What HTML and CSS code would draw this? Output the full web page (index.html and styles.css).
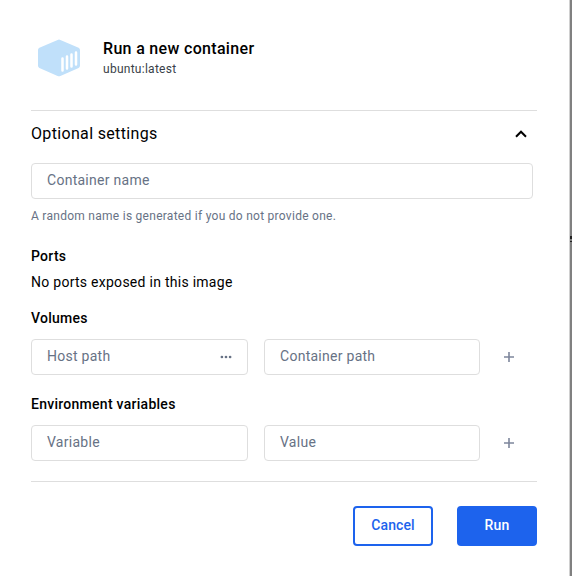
FILE: index.html
```html
<!DOCTYPE html>
<html lang="en">
<head>
<meta charset="utf-8">
<title>Run a new container</title>
<link rel="stylesheet" href="styles.css">
</head>
<body>
<main class="dialog">
  <header class="header">
    <svg class="logo" width="42" height="38" viewBox="0 0 42 38">
      <path d="M19.6.9a3.6 3.6 0 0 1 2.8 0L40.6 8.700Q42 9.400 42 11V26.600Q42 28.200 40.600 28.900L22.400 36.900a3.600 3.600 0 0 1-2.800 0L1.400 28.900Q0 28.200 0 26.600V11Q0 9.400 1.400 8.700Z" fill="#c0e0fa"/>
      <path d="M24.500 19.500V31.500M29 17.500V29.500M33.500 15.500V27.500M38 13.500V25.500" stroke="#fff" stroke-width="2.500" stroke-linecap="round"/>
    </svg>
    <div>
      <h1 class="title">Run a new container</h1>
      <p class="image">ubuntu:latest</p>
    </div>
  </header>
  <section class="settings">
    <div class="summary">
      <h2 class="summary-title">Optional settings</h2>
      <svg width="12" height="8" viewBox="0 0 12 8"><path d="M1 6.700 6 1.700 11 6.700" fill="none" stroke="#000" stroke-width="2"/></svg>
    </div>
    <div class="field field-name"><span>Container name</span></div>
    <p class="hint">A random name is generated if you do not provide one.</p>
    <h3 class="label">Ports</h3>
    <p class="text">No ports exposed in this image</p>
    <h3 class="label">Volumes</h3>
    <div class="row">
      <div class="field"><span>Host path</span>
        <svg class="browse" width="12" height="4" viewBox="0 0 12 4" fill="#677285"><circle cx="1.900" cy="2" r="1.350"/><circle cx="6" cy="2" r="1.350"/><circle cx="10.100" cy="2" r="1.350"/></svg>
      </div>
      <div class="field"><span>Container path</span></div>
      <svg class="add" width="10" height="10" viewBox="0 0 10 10"><path d="M0 5H10M5 0V10" stroke="#7d869c" stroke-width="1.600"/></svg>
    </div>
    <h3 class="label">Environment variables</h3>
    <div class="row">
      <div class="field"><span>Variable</span></div>
      <div class="field"><span>Value</span></div>
      <svg class="add" width="10" height="10" viewBox="0 0 10 10"><path d="M0 5H10M5 0V10" stroke="#7d869c" stroke-width="1.600"/></svg>
    </div>
  </section>
  <footer class="actions">
    <button class="button button-outline">Cancel</button>
    <button class="button button-primary">Run</button>
  </footer>
</main>
<svg class="backdrop-mark" width="2" height="8" viewBox="0 0 2 8"><path d="M0 1H2V4H0ZM0 6H2V7H0Z" fill="#222"/></svg>
</body>
</html>
```

FILE: styles.css
```css
* {
  box-sizing: border-box;
}

body {
  position: relative;
  margin: 0;
  height: 576px;
  overflow: hidden;
  background: #808080;
  font-family: Roboto, sans-serif;
  color: #000;
}

h1, h2, h3, p {
  margin: 0;
  font-weight: 400;
}

svg {
  display: block;
  flex: none;
}

.dialog {
  width: 570px;
  height: 576px;
  padding: 38px 32px 0 31px;
  background: #fff;
  border-right: 1px solid #d0d0d0;
}

.header {
  display: flex;
  gap: 23px;
  height: 72px;
  padding-left: 7px;
}

.logo {
  margin-top: 1px;
}

.title {
  margin-top: 1px;
  font-size: 16px;
  line-height: 20px;
  font-weight: 500;
  letter-spacing: 0.32px;
}

.image {
  margin-top: 2px;
  font-size: 12px;
  line-height: 16px;
  letter-spacing: 0.27px;
  color: #393f49;
}

.settings {
  height: 372px;
  border-top: 1px solid #dedede;
  border-bottom: 1px solid #dedede;
}

.summary {
  display: flex;
  justify-content: space-between;
  align-items: center;
  height: 52px;
  padding: 0 10px 6px 0;
}

.summary-title {
  font-size: 16px;
  line-height: 24px;
  letter-spacing: 0.34px;
}

.field {
  display: flex;
  justify-content: space-between;
  align-items: center;
  height: 36px;
  padding: 0 15px 2px;
  border: 1px solid #dedede;
  border-radius: 4px;
  font-size: 14px;
  letter-spacing: 0.27px;
  color: #677285;
}

.browse {
  margin-top: 1px;
}

.field-name {
  width: 502px;
}

.hint {
  margin: 9px 0 24px;
  font-size: 12px;
  line-height: 16px;
  letter-spacing: 0.27px;
  color: #677285;
}

.label {
  font-size: 14px;
  line-height: 16px;
  font-weight: 500;
  letter-spacing: 0.27px;
}

.text {
  margin: 8px 0 18px;
  font-size: 14px;
  line-height: 20px;
  letter-spacing: 0.27px;
}

.row {
  display: grid;
  grid-template-columns: 217px 216px 10px;
  column-gap: 16px;
  align-items: center;
  margin: 13px 0 21px;
}

.add {
  margin-left: 8px;
}

.actions {
  display: flex;
  justify-content: flex-end;
  gap: 24px;
  margin-top: 24px;
}

.button {
  width: 80px;
  height: 40px;
  padding: 0 0 2px;
  border: 2px solid #1d63ed;
  border-radius: 4px;
  font-family: inherit;
  font-size: 14px;
  font-weight: 500;
  letter-spacing: 0.1px;
}

.button-outline {
  background: #fff;
  color: #1d63ed;
}

.button-primary {
  background: #1d63ed;
  color: #fff;
  letter-spacing: 0.25px;
}

.backdrop-mark {
  position: absolute;
  top: 235px;
  left: 570px;
}
```
